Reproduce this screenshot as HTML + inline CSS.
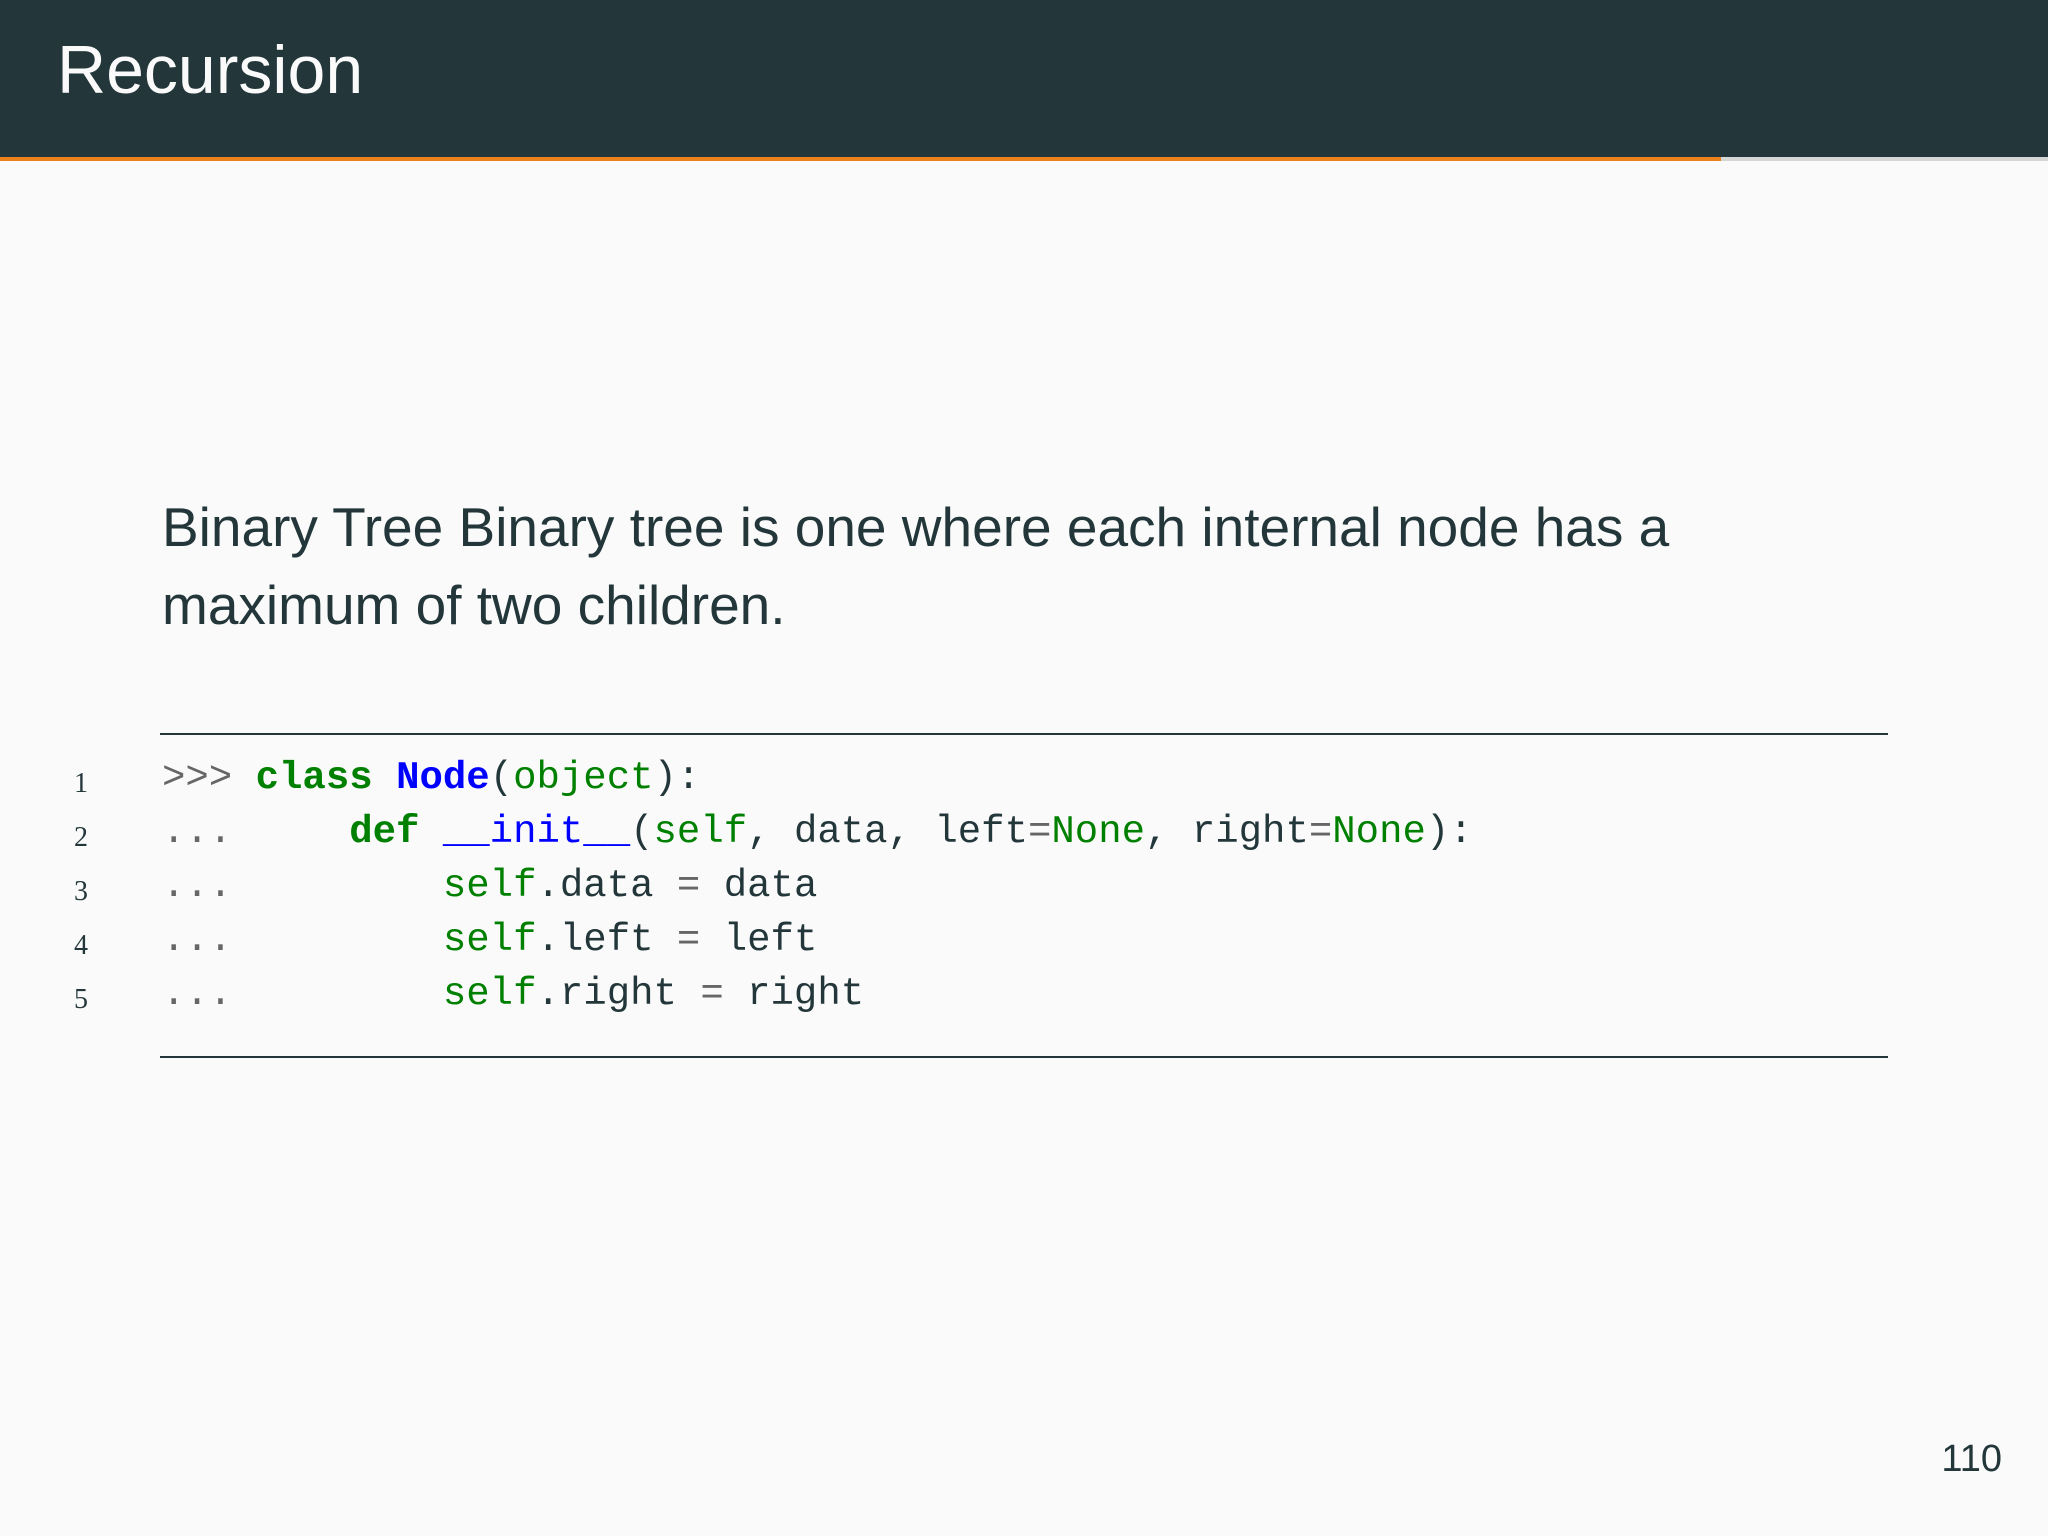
<!DOCTYPE html>
<html><head><meta charset="utf-8"><style>
html,body{margin:0;padding:0}
body{width:2048px;height:1536px;background:#fafafa;position:relative;overflow:hidden;font-family:"Liberation Sans",sans-serif;color:#23373b}
.hdr{position:absolute;left:0;top:0;width:2048px;height:157px;background:#23373b}
.hdr h1{position:absolute;left:57px;top:36px;margin:0;font-weight:normal;font-size:68px;color:#fafafa;line-height:1}
.bar{position:absolute;top:157px;left:0;height:4px;width:1721px;background:#eb811b}
.bar2{position:absolute;top:157px;left:1721px;height:4px;width:327px;background:#d6d6d6}
.txt{position:absolute;left:162px;top:488px;width:1740px;font-size:55px;line-height:78px;color:#23373b}
.txt b{font-weight:normal;color:#23373b}
.rule{position:absolute;left:160px;width:1728px;height:2px;background:#23373b}
.code{position:absolute;left:0;top:752px;font-family:"Liberation Mono",monospace;font-size:39px;line-height:54px;white-space:pre}
.ln{position:absolute;left:74px;font-family:"Liberation Serif",serif;font-size:28px;color:#23373b}
.line{position:absolute;left:162px;color:#23373b}
.p{color:#666}.k{color:#008000;font-weight:bold}.n{color:#0000ff;font-weight:bold}.f{color:#0000ff}.g{color:#008000}.o{color:#666}
.pg{position:absolute;right:46px;top:1438px;font-size:38px;color:#23373b}
</style></head><body>
<div class="hdr"><h1>Recursion</h1></div>
<div class="bar"></div><div class="bar2"></div>
<div class="txt"><b>Binary Tree</b> Binary tree is one where each internal node has a maximum of two children.</div>
<div class="rule" style="top:733px"></div>
<div class="rule" style="top:1056px"></div>
<div class="ln" style="top:768px">1</div>
<div class="ln" style="top:822px">2</div>
<div class="ln" style="top:876px">3</div>
<div class="ln" style="top:930px">4</div>
<div class="ln" style="top:984px">5</div>
<div class="line" style="top:756px;font-family:'Liberation Mono',monospace;font-size:39px;white-space:pre"><span class="p">&gt;&gt;&gt;</span> <span class="k">class</span> <span class="n">Node</span>(<span class="g">object</span>):</div>
<div class="line" style="top:810px;font-family:'Liberation Mono',monospace;font-size:39px;white-space:pre"><span class="p">...</span>     <span class="k">def</span> <span class="f">__init__</span>(<span class="g">self</span>, data, left<span class="o">=</span><span class="g">None</span>, right<span class="o">=</span><span class="g">None</span>):</div>
<div class="line" style="top:864px;font-family:'Liberation Mono',monospace;font-size:39px;white-space:pre"><span class="p">...</span>         <span class="g">self</span>.data <span class="o">=</span> data</div>
<div class="line" style="top:918px;font-family:'Liberation Mono',monospace;font-size:39px;white-space:pre"><span class="p">...</span>         <span class="g">self</span>.left <span class="o">=</span> left</div>
<div class="line" style="top:972px;font-family:'Liberation Mono',monospace;font-size:39px;white-space:pre"><span class="p">...</span>         <span class="g">self</span>.right <span class="o">=</span> right</div>
<div class="pg">110</div>
</body></html>
